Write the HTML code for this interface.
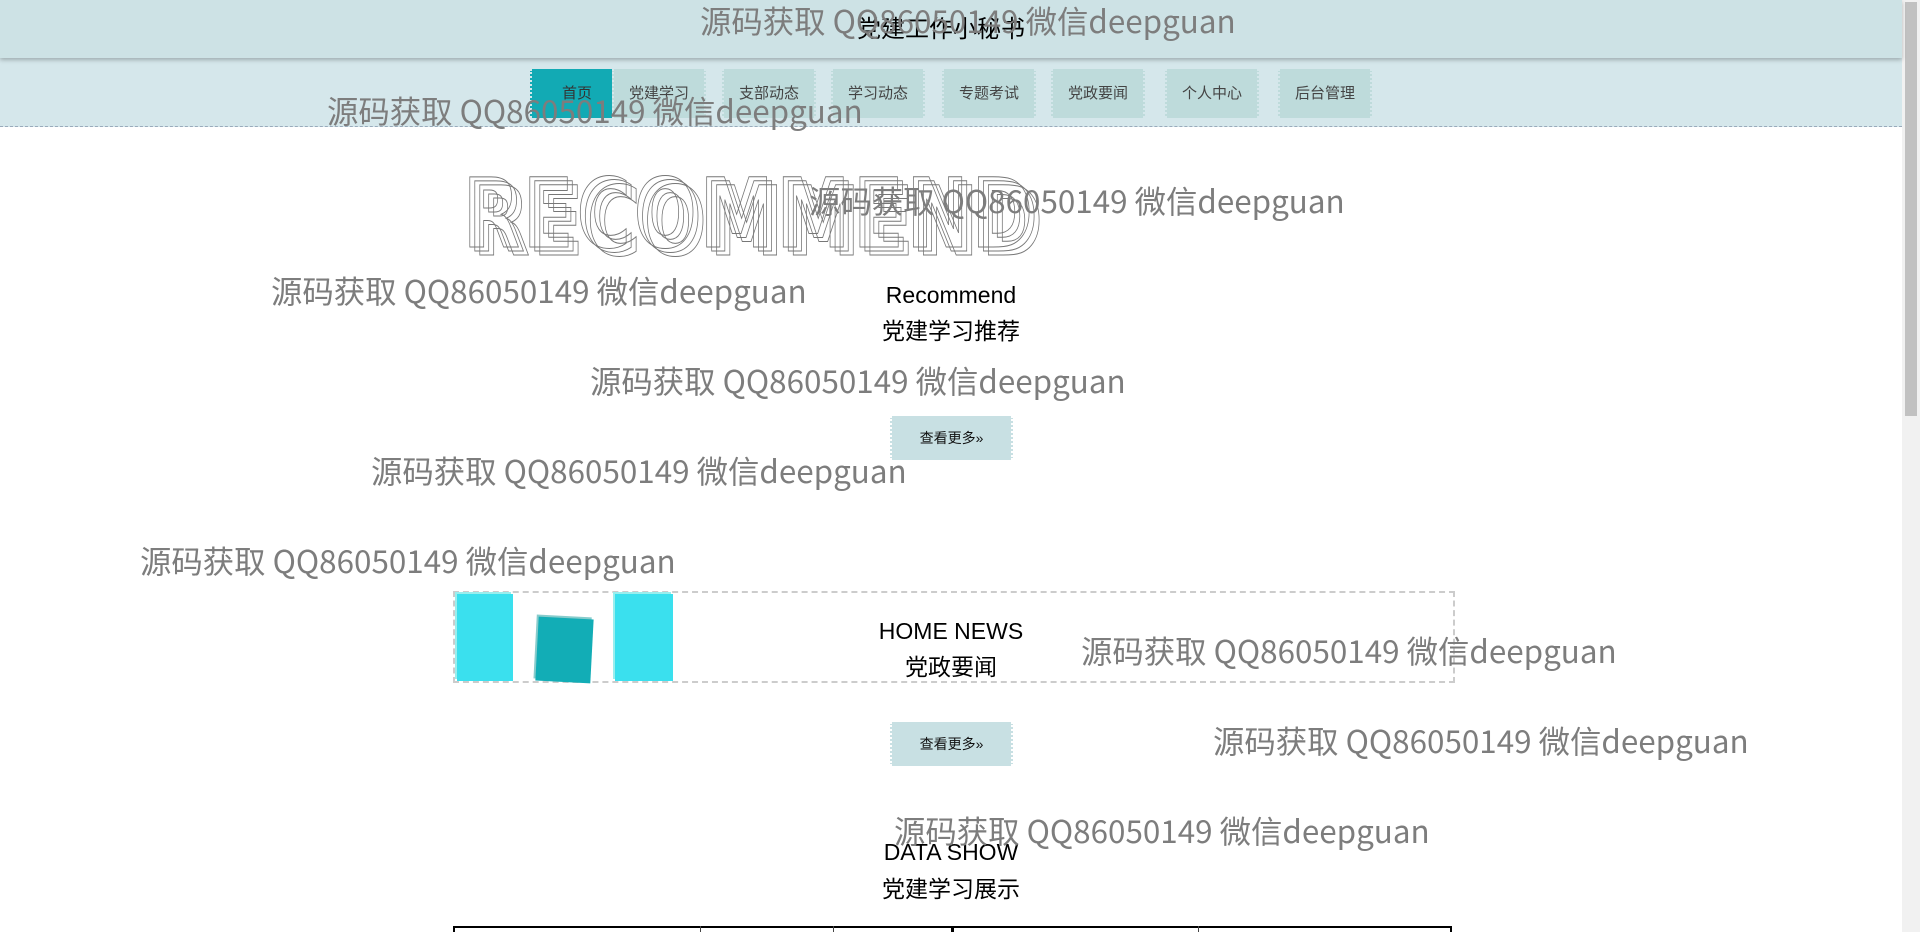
<!DOCTYPE html>
<html><head><meta charset="utf-8"><style>
*{margin:0;padding:0;box-sizing:border-box}
body{width:1920px;height:932px;overflow:hidden;background:#fff;font-family:"Liberation Sans","Noto Sans CJK SC",sans-serif;position:relative}
.a{position:absolute}
#hd{left:0;top:0;width:1902px;height:58px;background:#cde2e5;box-shadow:0 2px 4px rgba(0,0,0,.25);z-index:2}
#nav{left:0;top:58px;width:1902px;height:69px;background:#d5e7eb;border-bottom:1px dashed #9ab}
.ni{top:69px;height:49px;width:94px;background:#bedbdb;font-size:15px;color:#444;text-align:center;line-height:49px;border-left:2px dotted #d5e7eb;border-right:2px dotted #d5e7eb}
.ni.on{background:#12aab4;color:#333}
.t{left:0;width:1902px;text-align:center;color:#000}
.btn{left:890px;width:123px;height:44px;background:#c8e0e3;font-size:14px;text-align:center;line-height:44px;color:#111;border-left:2px dotted #fff;border-right:2px dotted #fff}
.wm{font-family:"Noto Sans CJK SC","Liberation Sans",sans-serif;font-size:31.4px;color:#7d7d7d;white-space:nowrap;line-height:1;z-index:5}
.rc{font-size:96px;font-weight:bold;color:transparent;-webkit-text-stroke:1px #777;letter-spacing:4px;white-space:nowrap;font-family:"DejaVu Sans",sans-serif;transform-origin:0 0;transform:scaleX(.77)}
</style></head><body>
<div class="a" id="hd"><div class="a t" style="top:9px;font-size:24px;font-family:'Noto Sans CJK SC',sans-serif;left:-10px">党建工作小秘书</div></div>
<div class="a" id="nav"></div>
<div class="a ni on" style="left:530px">首页</div>
<div class="a ni" style="left:612px">党建学习</div>
<div class="a ni" style="left:722px">支部动态</div>
<div class="a ni" style="left:831px">学习动态</div>
<div class="a ni" style="left:942px">专题考试</div>
<div class="a ni" style="left:1051px">党政要闻</div>
<div class="a ni" style="left:1165px">个人中心</div>
<div class="a ni" style="left:1278px">后台管理</div>
<div class="a" style="left:1902px;top:0;width:18px;height:932px;background:#f1f1f1"></div>
<div class="a" style="left:1905px;top:2px;width:12px;height:414px;background:#c1c1c1"></div>

<div class="a rc" style="left:463px;top:158px">RECOMMEND</div>
<div class="a rc" style="left:468px;top:162px">RECOMMEND</div>
<div class="a rc" style="left:473px;top:166px">RECOMMEND</div>

<div class="a t" style="top:282px;font-size:23px">Recommend</div>
<div class="a t" style="top:312px;font-size:23px">党建学习推荐</div>
<div class="a btn" style="top:416px">查看更多»</div>

<div class="a" style="left:453px;top:591px;width:1002px;height:92px;border:2px dashed #ccc"></div>
<div class="a" style="left:457px;top:594px;width:56px;height:87px;background:#3ae0ee;box-shadow:-2px -2px 0 #9ee"></div>
<div class="a" style="left:537px;top:618px;width:55px;height:64px;background:#12adb6;transform:rotate(3deg);box-shadow:-2px -2px 0 #8cc"></div>
<div class="a" style="left:615px;top:594px;width:58px;height:87px;background:#3ae0ee;box-shadow:-2px -2px 0 #9ee"></div>
<div class="a t" style="top:618px;font-size:23px">HOME NEWS</div>
<div class="a t" style="top:648px;font-size:23px">党政要闻</div>
<div class="a btn" style="top:722px">查看更多»</div>
<div class="a t" style="top:839px;font-size:23px">DATA SHOW</div>
<div class="a t" style="top:870px;font-size:23px">党建学习展示</div>
<div class="a" style="left:453px;top:926px;width:999px;height:6px;border-top:2px solid #000;border-left:2px solid #000;border-right:2px solid #000"></div>
<div class="a" style="left:700px;top:926px;width:1px;height:6px;background:#444"></div>
<div class="a" style="left:833px;top:926px;width:1px;height:6px;background:#444"></div>
<div class="a" style="left:951px;top:926px;width:3px;height:6px;background:#000"></div>
<div class="a" style="left:1198px;top:926px;width:1px;height:6px;background:#444"></div>

<div class="a wm" style="left:700px;top:5px">源码获取 QQ86050149 微信deepguan</div>
<div class="a wm" style="left:327px;top:95px">源码获取 QQ86050149 微信deepguan</div>
<div class="a wm" style="left:809px;top:185px">源码获取 QQ86050149 微信deepguan</div>
<div class="a wm" style="left:271px;top:275px">源码获取 QQ86050149 微信deepguan</div>
<div class="a wm" style="left:590px;top:365px">源码获取 QQ86050149 微信deepguan</div>
<div class="a wm" style="left:371px;top:455px">源码获取 QQ86050149 微信deepguan</div>
<div class="a wm" style="left:140px;top:545px">源码获取 QQ86050149 微信deepguan</div>
<div class="a wm" style="left:1081px;top:635px">源码获取 QQ86050149 微信deepguan</div>
<div class="a wm" style="left:1213px;top:725px">源码获取 QQ86050149 微信deepguan</div>
<div class="a wm" style="left:894px;top:815px">源码获取 QQ86050149 微信deepguan</div>
</body></html>
